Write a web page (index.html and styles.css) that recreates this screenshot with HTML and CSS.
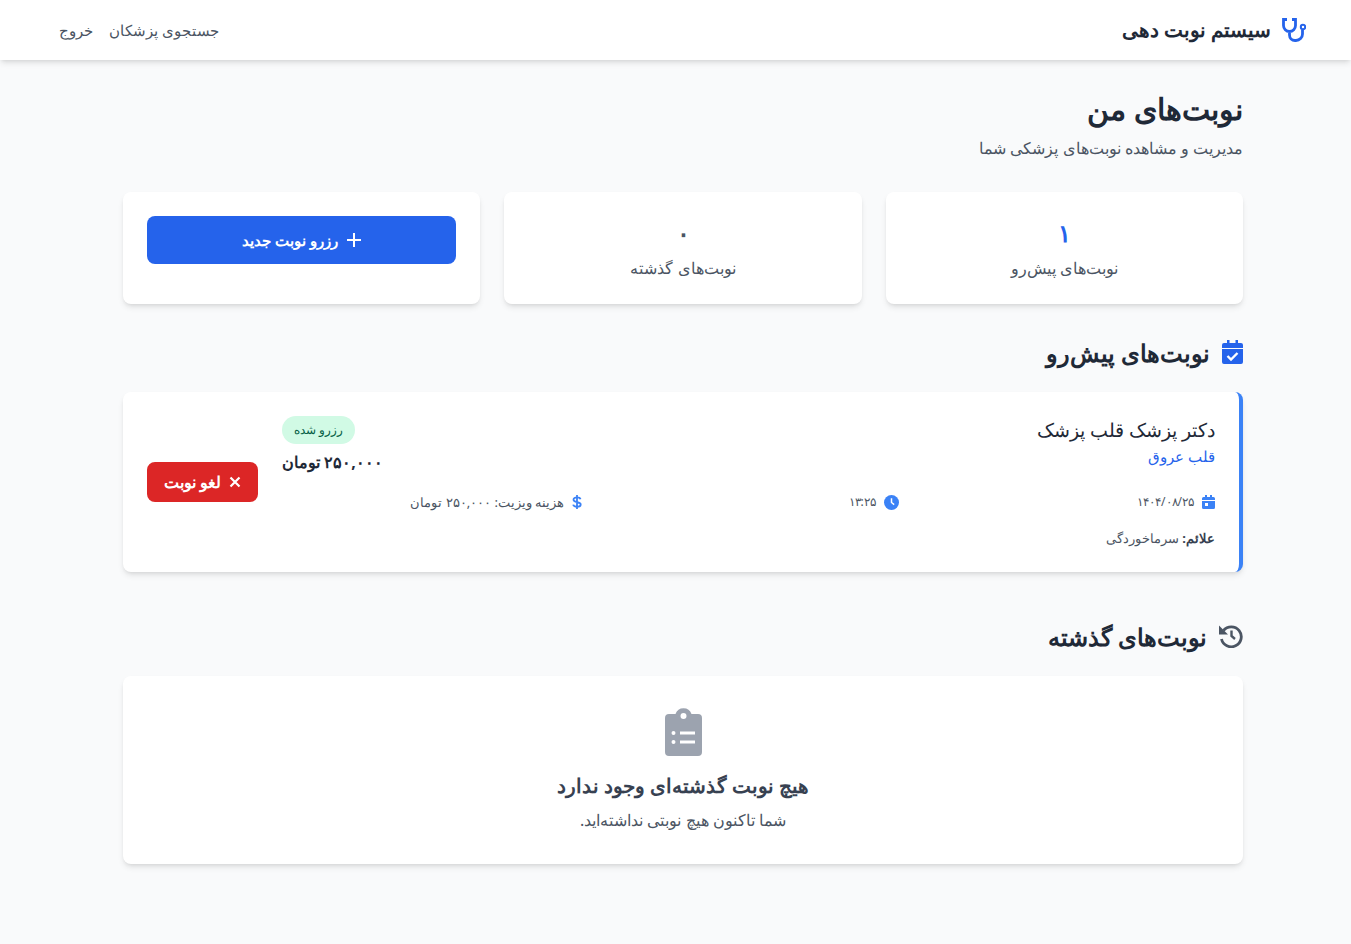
FILE: index.html
```html
<!DOCTYPE html>
<html lang="fa" dir="rtl">
<head>
	<meta charset="utf-8">
	<title>نوبت‌های من</title>
	<link rel="stylesheet" href="styles.css">
</head>
<body>
	<nav class="navbar">
		<div class="brand">
			<svg class="brand-icon" viewBox="0 0 24 24"><path d="M5 1.500H1.500V7.500a6 6 0 0 0 12 0V1.500H10M7.500 14v3a5.500 5.500 0 0 0 5.500 5.500h1a6.500 6.500 0 0 0 6.500-6.500V12" fill="none" stroke="currentColor" stroke-width="2.800"/><circle cx="21" cy="9" r="2.200" fill="none" stroke="currentColor" stroke-width="2"/></svg>
			<span class="brand-name">سیستم نوبت دهی</span>
		</div>
		<div class="nav-links">
			<a>جستجوی پزشکان</a>
			<a>خروج</a>
		</div>
	</nav>

	<main class="page">
		<h1 class="page-title">نوبت‌های من</h1>
		<p class="page-sub">مدیریت و مشاهده نوبت‌های پزشکی شما</p>

		<div class="stats">
			<div class="card stat">
				<div class="stat-num blue">۱</div>
				<div class="stat-label">نوبت‌های پیش‌رو</div>
			</div>
			<div class="card stat">
				<div class="stat-num gray">۰</div>
				<div class="stat-label">نوبت‌های گذشته</div>
			</div>
			<div class="card stat-action">
				<a class="btn-new">
					<svg class="plus" viewBox="0 0 14 14"><path d="M7 0v14M0 7h14" stroke="currentColor" stroke-width="2" fill="none"/></svg>
					رزرو نوبت جدید
				</a>
			</div>
		</div>

		<h2 class="section-title">
			<svg class="section-icon blue" viewBox="0 0 21 24"><path fill="currentColor" d="M5 0h2.500v3h6V0H16v3h3a2 2 0 0 1 2 2v3H0V5a2 2 0 0 1 2-2h3zM0 9h21v13a2 2 0 0 1-2 2H2a2 2 0 0 1-2-2z"/><path d="M5.500 16l3.500 3.500 6.500-6.500" fill="none" stroke="#fff" stroke-width="2.400"/></svg>
			نوبت‌های پیش‌رو
		</h2>

		<div class="card appt">
			<div class="appt-main">
				<div class="appt-head">
					<div>
						<div class="doctor">دکتر پزشک قلب پزشک</div>
						<div class="spec">قلب عروق</div>
					</div>
					<div class="appt-status">
						<span class="badge">رزرو شده</span>
						<span class="price">۲۵۰,۰۰۰ تومان</span>
					</div>
				</div>
				<div class="details">
					<div class="detail">
						<svg class="mini cal" viewBox="0 0 13 14"><path fill="currentColor" d="M3 0h2v2h3V0h2v2h1.500A1.500 1.500 0 0 1 13 3.500V5H0V3.500A1.500 1.500 0 0 1 1.500 2H3zM0 6h13v6.500a1.500 1.500 0 0 1-1.500 1.500h-10A1.500 1.500 0 0 1 0 12.500z"/><rect x="3" y="8" width="3" height="3" fill="#fff"/></svg>
						<span class="digits">۱۴۰۴/۰۸/۲۵</span>
					</div>
					<div class="detail">
						<svg class="mini clock" viewBox="0 0 14 14"><circle cx="7" cy="7" r="7" fill="currentColor"/><path d="M7 3v4l2.500 2" fill="none" stroke="#fff" stroke-width="1.400"/></svg>
						<span class="digits">۱۳:۲۵</span>
					</div>
					<div class="detail">
						<svg class="mini dollar" viewBox="0 0 10 14"><path d="M8.500 4.200C8.200 3 7 2.400 5 2.400c-2 0-3.500.8-3.500 2.300 0 3.300 7.200 1.500 7.200 4.700 0 1.500-1.600 2.300-3.700 2.300-2.100 0-3.500-.7-3.800-2.100M5 0v14" fill="none" stroke="currentColor" stroke-width="1.800"/></svg>
						<span>هزینه ویزیت: ۲۵۰,۰۰۰ تومان</span>
					</div>
				</div>
				<p class="symptoms"><b>علائم:</b> سرماخوردگی</p>
			</div>
			<a class="btn-cancel">
				<svg class="cross" viewBox="0 0 12 12"><path d="M1.500 1.500l9 9M10.500 1.500l-9 9" stroke="currentColor" stroke-width="2.200" fill="none"/></svg>
				لغو نوبت
			</a>
		</div>

		<h2 class="section-title past">
			<svg class="section-icon history dark" viewBox="0 0 24 24"><path d="M4.500 6.500A10 10 0 1 1 2.500 15" fill="none" stroke="currentColor" stroke-width="2.800"/><path fill="currentColor" d="M0 1.500l9 9H0z"/><path d="M12.500 6.500V12l3.500 3" fill="none" stroke="currentColor" stroke-width="2.400"/></svg>
			نوبت‌های گذشته
		</h2>

		<div class="card empty">
			<svg class="empty-icon" viewBox="0 0 37 48"><path fill="currentColor" fill-rule="evenodd" d="M4 6h6.500a8.500 8.500 0 0 1 16 0H33a4 4 0 0 1 4 4v34a4 4 0 0 1-4 4H4a4 4 0 0 1-4-4V10a4 4 0 0 1 4-4zM18.500 5a3 3 0 1 0 0 6 3 3 0 0 0 0-6zM8.500 23a2 2 0 1 0 0 4 2 2 0 0 0 0-4zM8.500 32a2 2 0 1 0 0 4 2 2 0 0 0 0-4zM15 23.500v3h15v-3zM15 32.500v3h15v-3z"/></svg>
			<h3 class="empty-title">هیچ نوبت گذشته‌ای وجود ندارد</h3>
			<p class="empty-text">شما تاکنون هیچ نوبتی نداشته‌اید.</p>
		</div>
	</main>
</body>
</html>
```

FILE: styles.css
```css
*{
	box-sizing:border-box;
}

body{
	margin:0;
	background:#f9fafb;
	color:#1f2937;
	font-family:"Noto Sans",sans-serif;
	overflow-x:hidden;
}

.navbar{
	height:60px;
	background:#fff;
	box-shadow:0 4px 6px -1px rgba(0,0,0,.1),0 2px 4px -2px rgba(0,0,0,.1);
	display:flex;
	align-items:center;
	justify-content:space-between;
	padding:0 45px 0 59px;
}

.brand{
	display:flex;
	align-items:center;
	gap:11px;
	font-size:20px;
	font-weight:bold;
}

.brand-name{
	padding-bottom:2px;
}

.brand-icon{
	width:24px;
	height:24px;
	color:#2563eb;
}

.nav-links{
	display:flex;
	gap:16px;
	font-size:15px;
	color:#4b5563;
}

.page{
	padding:32px 108px 80px 123px;
}

.page-title{
	margin:0 0 10px;
	font-size:30px;
	line-height:34px;
}

.page-sub{
	margin:0 0 32px;
	font-size:16px;
	line-height:24px;
	color:#4b5563;
}

.card{
	background:#fff;
	border-radius:8px;
	box-shadow:0 4px 6px -1px rgba(0,0,0,.1),0 2px 4px -2px rgba(0,0,0,.1);
}

.stats{
	display:grid;
	grid-template-columns:repeat(3,1fr);
	gap:24px;
}

.stat,.stat-action{
	height:112px;
	padding:24px;
}

.stat{
	text-align:center;
}

.stat-num{
	font-size:24px;
	line-height:32px;
	margin:1px 0 7px;
	font-weight:bold;
}

.stat-label{
	font-size:16px;
	line-height:24px;
	color:#4b5563;
}

.blue{
	color:#2563eb;
}

.gray{
	color:#4b5563;
}

.dark{
	color:#4b5563;
}

.btn-new{
	height:48px;
	background:#2563eb;
	color:#fff;
	border-radius:8px;
	display:flex;
	align-items:center;
	justify-content:center;
	gap:9px;
	font-size:15px;
	font-weight:bold;
}

.plus{
	width:14px;
	height:14px;
}

.section-title{
	margin:30px 0 22px;
	height:36px;
	display:flex;
	align-items:center;
	gap:12px;
	font-size:24px;
}

.section-title.past{
	margin-top:46px;
}

.section-icon{
	width:21px;
	height:24px;
}

.section-icon.history{
	width:24px;
}

.appt{
	height:180px;
	padding:24px;
	border-right:4px solid #3b82f6;
	display:flex;
	align-items:center;
	gap:24px;
}

.appt-main{
	flex:1;
	align-self:flex-start;
}

.appt-head{
	display:flex;
	justify-content:space-between;
	align-items:flex-start;
}

.doctor{
	font-size:19px;
	line-height:28px;
	font-weight:500;
}

.spec{
	font-size:15px;
	line-height:24px;
	color:#2563eb;
}

.appt-status{
	display:flex;
	flex-direction:column;
	align-items:flex-end;
	gap:4px;
}

.badge{
	height:28px;
	padding:0 12px;
	border-radius:14px;
	background:#d1fae5;
	color:#065f46;
	font-size:12px;
	line-height:28px;
	font-weight:500;
}

.price{
	font-size:16px;
	line-height:28px;
	font-weight:bold;
}

.details{
	display:grid;
	grid-template-columns:repeat(3,1fr);
	gap:16px;
	margin-top:16px;
}

.detail{
	display:flex;
	align-items:center;
	gap:8px;
	font-size:13px;
	line-height:20px;
	color:#4b5563;
}

.digits{
	font-size:12px;
}

.mini{
	height:14px;
	color:#3b82f6;
}

.mini.cal{
	width:13px;
}

.mini.clock{
	width:15px;
	height:15px;
}

.mini.dollar{
	width:10px;
}

.symptoms{
	margin:16px 0 0;
	font-size:13px;
	line-height:20px;
	color:#4b5563;
}

.symptoms b{
	color:#374151;
}

.btn-cancel{
	height:40px;
	padding:0 17px;
	background:#dc2626;
	color:#fff;
	border-radius:8px;
	display:flex;
	align-items:center;
	gap:8px;
	font-size:16px;
	font-weight:bold;
}

.cross{
	width:12px;
	height:12px;
}

.empty{
	height:188px;
	padding:32px;
	text-align:center;
}

.empty-icon{
	width:37px;
	height:48px;
	color:#9ca3af;
	display:block;
	margin:0 auto 16px;
}

.empty-title{
	margin:0 0 8px;
	font-size:20px;
	line-height:28px;
	color:#374151;
}

.empty-text{
	margin:0;
	font-size:16px;
	line-height:24px;
	color:#4b5563;
}
```
